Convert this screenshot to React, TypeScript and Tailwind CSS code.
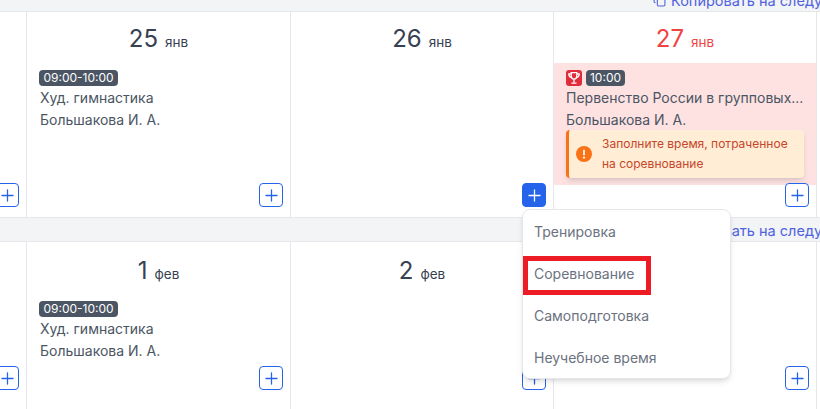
import { Copy, Plus } from "lucide-react";

const font = { fontFamily: "Inter, 'Noto Sans', sans-serif" };

const AddButton = ({ active, low }: { active?: boolean; low?: boolean }) => (
  <button
    className={`absolute right-[7px] flex h-6 w-6 items-center justify-center rounded-[4px] border border-[#2563eb] ${
      low ? "bottom-[19px]" : "bottom-[10px]"
    } ${active ? "bg-[#2563eb] text-white" : "bg-white text-[#2563eb]"}`}
  >
    <Plus size={19} strokeWidth={1.6} />
  </button>
);

const DayHead = ({ day, month, red, low }: { day: string; month: string; red?: boolean; low?: boolean }) => (
  <div
    className={`flex items-baseline justify-center gap-[7px] ${low ? "h-[52px] pt-[13px]" : "h-[51px] pt-[11px]"} ${
      red ? "text-[#ef4444]" : "text-[#374151]"
    }`}
  >
    <span className="text-[24px] leading-[32px]">{day}</span>
    <span className="text-[13.5px]">{month}</span>
  </div>
);

const Lesson = () => (
  <div className="px-3 pt-[7px] text-[14px] text-[#4b5563]">
    <span className="flex h-4 w-[79px] items-center justify-center rounded-[4px] bg-[#4b5563] text-[12px] text-white">
      09:00-10:00
    </span>
    <div className="mt-px pl-px leading-[22px]">Худ. гимнастика</div>
    <div className="pl-px leading-[22px]">Большакова И. А.</div>
  </div>
);

const Band = () => (
  <div className="flex h-[24px] items-center justify-end gap-[5px] overflow-hidden border-b border-[#e5e7eb] bg-[#f3f4f6] pt-[2px] text-[14.5px] whitespace-nowrap text-[#4f63e0]">
    <Copy size={13} className="shrink-0" />
    <span className="w-[149px] shrink-0 overflow-hidden">Копировать на следующую</span>
  </div>
);

const Cell = ({ children }: { children?: React.ReactNode }) => (
  <div className="relative border-r border-[#e5e7eb] bg-white">{children}</div>
);

const Row = ({ height, children }: { height: string; children: React.ReactNode }) => (
  <div className={`grid grid-cols-[27px_264px_263px_263px_3px] ${height}`}>
    {children}
    <div className="bg-white" />
  </div>
);

const AlertIcon = () => (
  <svg width="16" height="16" viewBox="0 0 16 16" className="shrink-0">
    <circle cx="8" cy="8" r="8" fill="#f97316" />
    <rect x="7" y="3.5" width="2" height="6" rx="1" fill="#ffedd5" />
    <circle cx="8" cy="11.6" r="1.2" fill="#ffedd5" />
  </svg>
);

const TrophyIcon = () => (
  <svg width="14" height="14" viewBox="0 0 14 14" fill="none" stroke="white" strokeWidth="1.3">
    <path d="M4.2 1.7h5.6v3.6a2.8 2.8 0 0 1-5.6 0z" />
    <path d="M4.2 2.8H1.8c0 2.2.9 3.5 2.8 3.8M9.8 2.8h2.4c0 2.2-.9 3.5-2.8 3.8" />
    <path d="M7 8.2v3M4.5 12.1h5" />
  </svg>
);

const Competition = () => (
  <div className="h-[122px] bg-[#fee2e2] px-3 pt-[7px] text-[14px] text-[#4b5563]">
    <div className="flex items-center gap-1">
      <span className="flex h-4 w-4 items-center justify-center rounded-[3px] bg-[#e02d3c]">
        <TrophyIcon />
      </span>
      <span className="flex h-4 w-[39px] items-center justify-center rounded-[4px] bg-[#4b5563] text-[12px] text-white">
        10:00
      </span>
    </div>
    <div className="mt-px truncate leading-[22px] whitespace-nowrap">Первенство России в групповых...</div>
    <div className="leading-[22px]">Большакова И. А.</div>
    <div className="mt-[-1px] flex h-[48px] items-center gap-[10px] rounded-[4px] border-l-[3px] border-[#f97316] bg-[#ffedd5] pl-[7px] text-[12px] leading-[20px] text-[#c7452a] shadow-md">
      <AlertIcon />
      <span>
        Заполните время, потраченное
        <br />
        на соревнование
      </span>
    </div>
  </div>
);

const menuItems = ["Тренировка", "Соревнование", "Самоподготовка", "Неучебное время"];

const Menu = () => (
  <div className="absolute top-[209px] left-[522px] z-10 flex h-[170px] w-[209px] flex-col justify-center rounded-[8px] border border-[#e5e7eb] bg-white pt-px text-[14px] text-[#6b7280] shadow-md">
    {menuItems.map((item) => (
      <div key={item} className="flex h-[42px] items-center pl-[11px]">
        {item}
      </div>
    ))}
  </div>
);

export default function App() {
  return (
    <div className="relative h-[409px] w-[820px] overflow-hidden bg-white" style={font}>
      <div className="mt-[-12px]">
        <Band />
      </div>
      <Row height="h-[205px]">
        <Cell>
          <AddButton />
        </Cell>
        <Cell>
          <DayHead day="25" month="янв" />
          <Lesson />
          <AddButton />
        </Cell>
        <Cell>
          <DayHead day="26" month="янв" />
          <AddButton active />
        </Cell>
        <Cell>
          <DayHead day="27" month="янв" red />
          <Competition />
          <AddButton />
        </Cell>
      </Row>
      <div className="border-t border-[#e5e7eb]">
        <Band />
      </div>
      <Row height="h-[167px]">
        <Cell>
          <AddButton low />
        </Cell>
        <Cell>
          <DayHead day="1" month="фев" low />
          <Lesson />
          <AddButton low />
        </Cell>
        <Cell>
          <DayHead day="2" month="фев" low />
          <AddButton low />
        </Cell>
        <Cell>
          <AddButton low />
        </Cell>
      </Row>
      <Menu />
      <div className="absolute top-[256px] left-[523px] z-20 h-[39px] w-[128px] border-[5px] border-[#ed1c24]" />
    </div>
  );
}
